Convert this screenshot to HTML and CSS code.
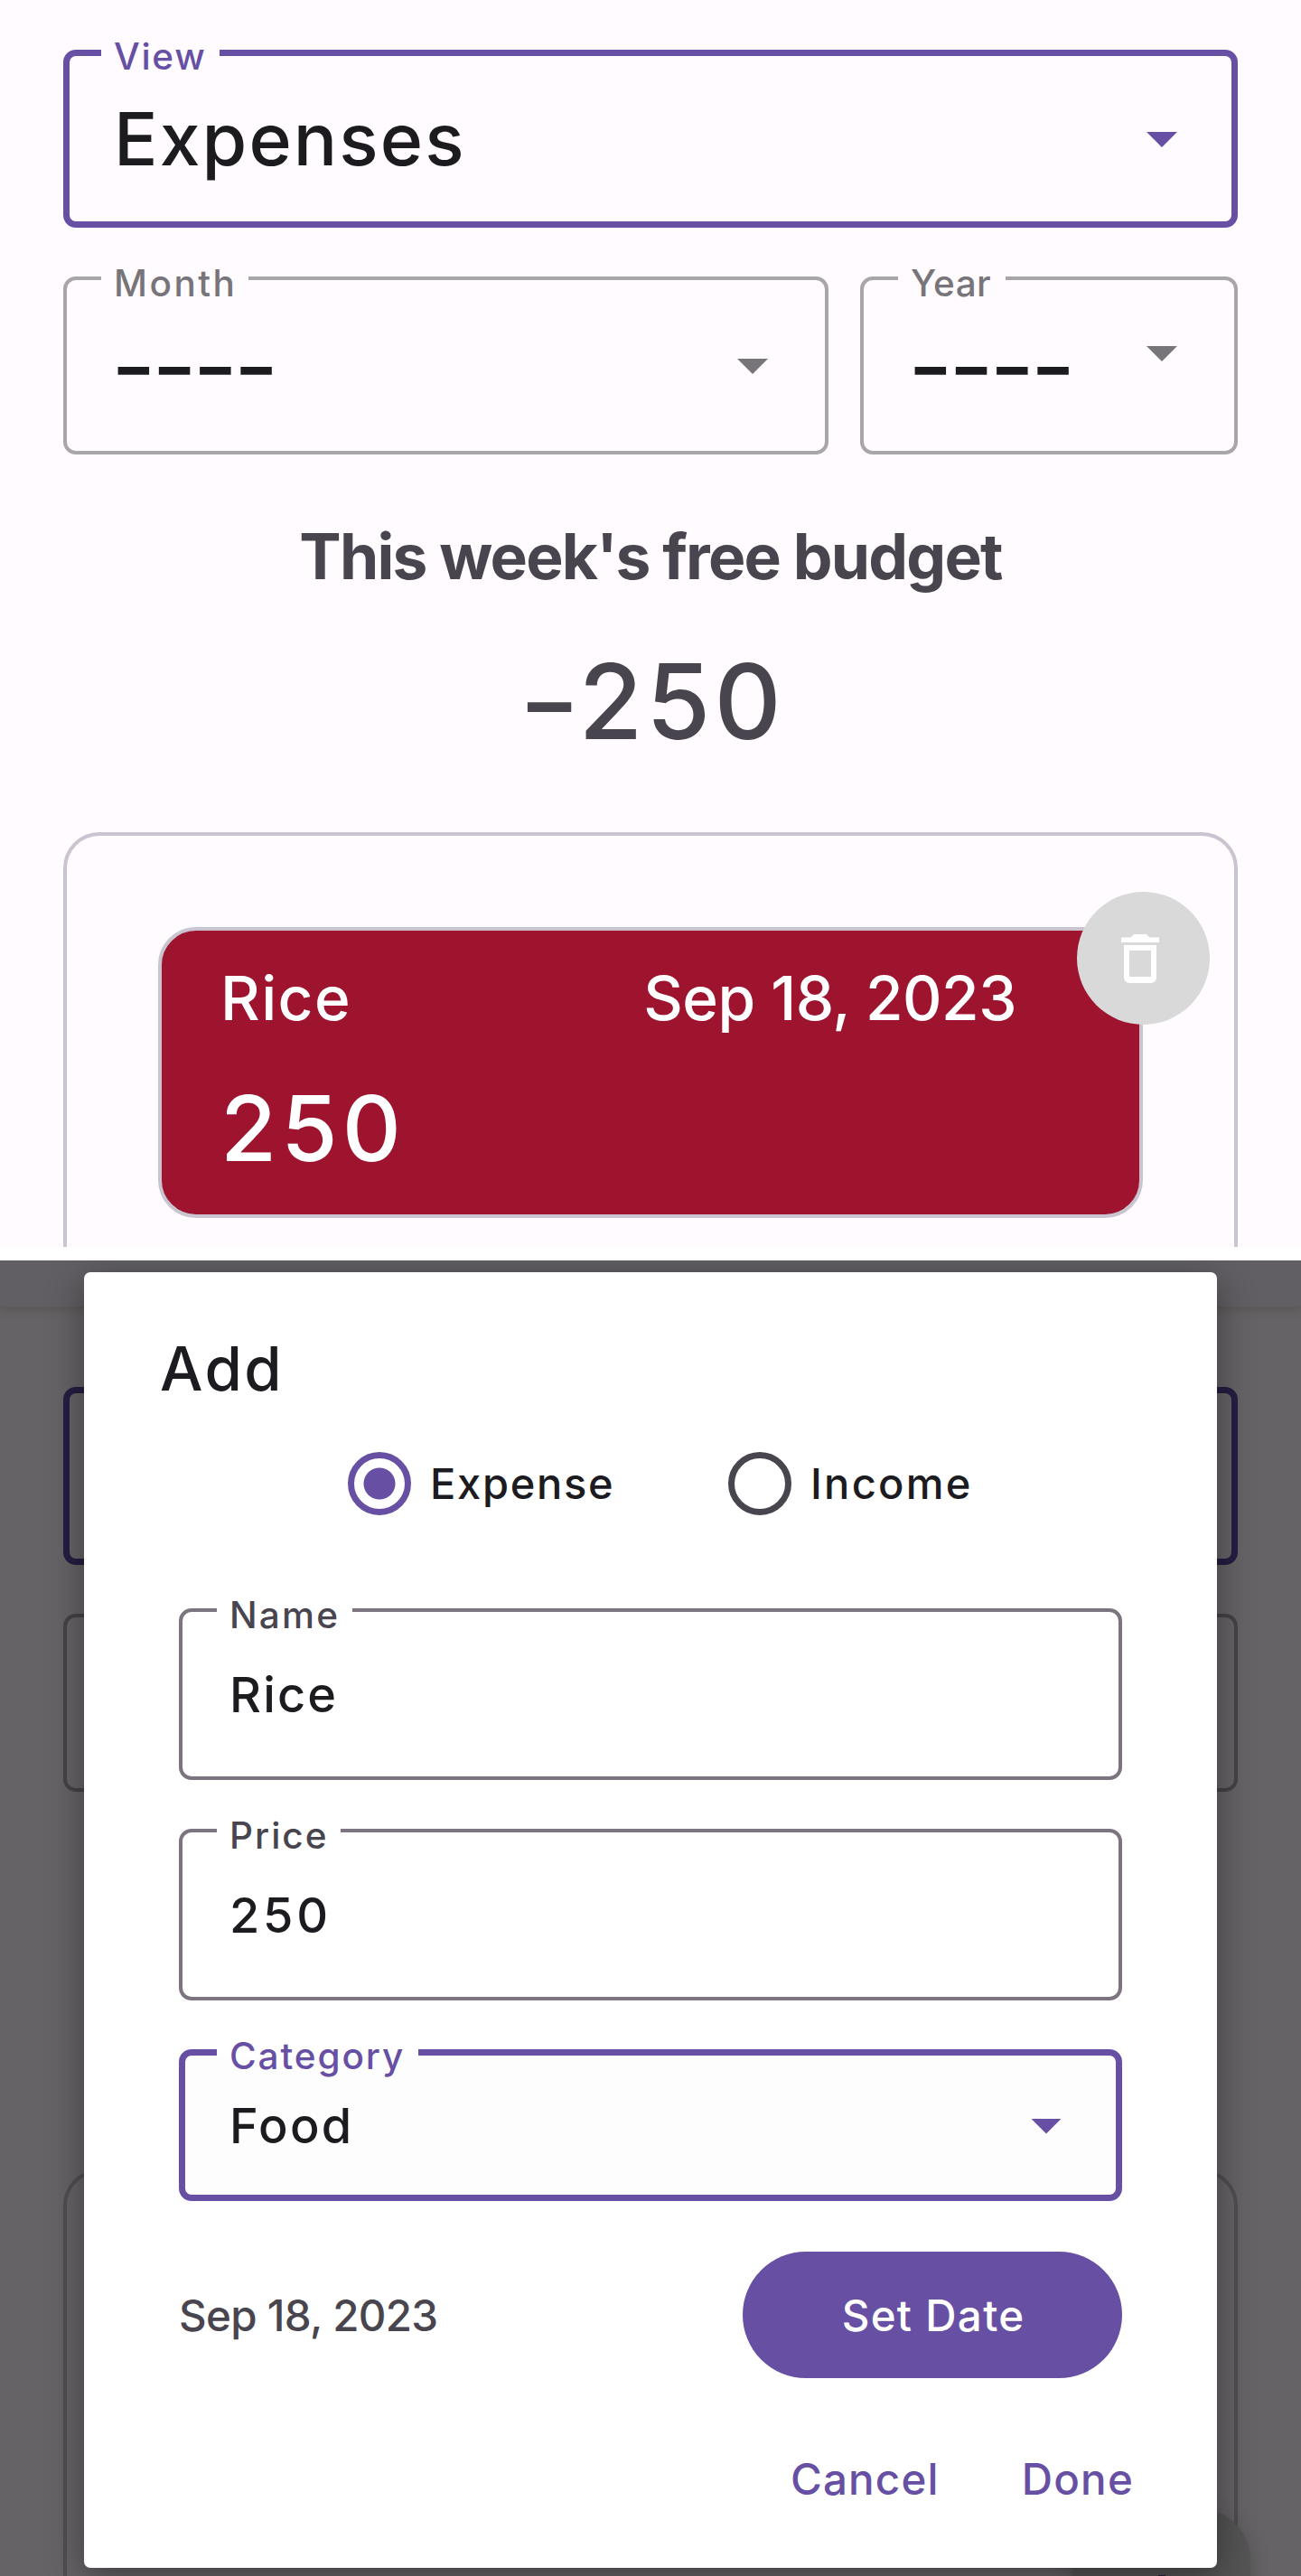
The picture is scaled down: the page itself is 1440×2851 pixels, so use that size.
FILE: index.html
```html
<!DOCTYPE html>
<html lang="en">
<head>
<meta charset="utf-8">
<title>Budget</title>
<link rel="stylesheet" href="styles.css">
</head>
<body>
<main class="screen">
  <div class="field field-active">
    <span class="label label-view">View</span>
    <span class="value value-lg">Expenses</span>
    <i class="caret"></i>
  </div>
  <div class="filters">
    <div class="field field-muted month">
      <span class="label label-month">Month</span>
      <span class="value value-empty">----</span>
      <i class="caret"></i>
    </div>
    <div class="field field-muted year">
      <span class="label label-year">Year</span>
      <span class="value value-empty">----</span>
      <i class="caret"></i>
    </div>
  </div>
  <h1 class="heading">This week's free budget</h1>
  <div class="total"><span class="minus">-</span>250</div>
  <section class="card">
    <article class="entry">
      <div class="entry-top">
        <span class="entry-name">Rice</span>
        <span class="entry-date">Sep 18, 2023</span>
      </div>
      <div class="entry-amount">250</div>
      <button class="delete" aria-label="Delete">
        <svg width="42" height="54" viewBox="0 0 42 54" fill="#fff">
          <path d="M0 3.5h10.500L14 0h14l3.500 3.500H42V9H0z"/>
          <path fill-rule="evenodd" d="M3 12h36v36a6 6 0 0 1-6 6H9a6 6 0 0 1-6-6zM9 18v29h24V18z"/>
        </svg>
      </button>
    </article>
  </section>
</main>

<section class="screen-dim">
  <div class="backdrop">
    <div class="appbar"></div>
    <div class="backdrop-body">
      <div class="ghost ghost-active"></div>
      <div class="filters">
        <div class="ghost month"></div>
        <div class="ghost year"></div>
      </div>
      <div class="ghost-card"></div>
    </div>
    <div class="fab"></div>
  </div>

  <div class="dialog">
    <h2 class="title">Add</h2>
    <div class="radios">
      <label class="radio radio-on"><span class="dot"></span><span class="radio-text">Expense</span></label>
      <label class="radio"><span class="dot"></span><span class="radio-text radio-income">Income</span></label>
    </div>
    <div class="form">
      <div class="field">
        <span class="label label-name">Name</span>
        <span class="value">Rice</span>
      </div>
      <div class="field">
        <span class="label label-price">Price</span>
        <span class="value value-num">250</span>
      </div>
      <div class="field field-active field-short">
        <span class="label label-category">Category</span>
        <span class="value">Food</span>
        <i class="caret"></i>
      </div>
      <div class="date-row">
        <span class="date">Sep 18, 2023</span>
        <button class="set-date">Set Date</button>
      </div>
    </div>
    <div class="actions">
      <span>Cancel</span>
      <span>Done</span>
    </div>
  </div>
</section>
</body>
</html>
```
FILE: styles.css
```css
* { box-sizing: border-box; }
body {
  margin: 0;
  width: 1440px;
  background: #fff;
  color: #1c1b1f;
  font-family: Inter, "Liberation Sans", sans-serif;
  font-weight: 500;
}
h1, h2 { margin: 0; }
button { border: 0; padding: 0; font: inherit; }

.screen {
  height: 1380px;
  padding: 55px 70px 0;
  overflow: hidden;
  background: #fffbff;
}

/* Outlined fields */
.field {
  --line: #7c7580;
  --ink: #49454f;
  --bw: 4px;
  --surface: #fff;
  position: relative;
  display: flex;
  align-items: center;
  justify-content: space-between;
  height: 190px;
  padding: 0 calc(67px - var(--bw)) 0 calc(56px - var(--bw));
  border: var(--bw) solid var(--line);
  border-radius: 14px;
}
.screen .field { --surface: #fffbff; height: 197px; }
.field-active { --line: #6750a4; --ink: #6750a4; --bw: 7px; }
.field-muted { --line: #a9a6aa; --ink: #78757a; }
.form .field-short { height: 168px; background: #fdfdfd; }

.label {
  position: absolute;
  top: calc(-12px - var(--bw));
  left: calc(42px - var(--bw));
  padding-left: 14px;
  background: linear-gradient(var(--surface), var(--surface)) 0 11px / 100% 10px no-repeat;
  color: var(--ink);
  font-size: 40.5px;
  line-height: 40px;
  white-space: nowrap;
}
.label-view { width: 131px; letter-spacing: 1.7px; }
.label-month { width: 163px; letter-spacing: 2.5px; }
.label-year { width: 119px; letter-spacing: 0.4px; }
.label-name { width: 150px; letter-spacing: 2.2px; }
.label-price { width: 137px; letter-spacing: 2px; }
.label-category { width: 223px; letter-spacing: 1.9px; }

.value { font-size: 54px; letter-spacing: 2.2px; }
.value-num { letter-spacing: 3.8px; }
.value-lg { font-size: 80.5px; letter-spacing: 2.1px; }
.value-empty { margin-left: -3px; font-size: 108px; font-weight: 400; line-height: 100px; letter-spacing: -4.4px; }

.caret {
  width: 34px;
  height: 17px;
  margin-top: 2px;
  background: var(--line);
  clip-path: polygon(0 0, 100% 0, 50% 100%);
}
.field-muted .caret { background: #78757a; }
.year .caret { margin-bottom: 28px; }

.filters { display: flex; gap: 35px; margin-top: 54px; }
.month { width: 847px; }
.year { width: 418px; }

.heading {
  margin-top: 73px;
  color: #49454f;
  font-size: 69.5px;
  font-weight: 700;
  line-height: 80px;
  letter-spacing: -1.8px;
  text-align: center;
}
.total {
  margin-top: 61px;
  padding-left: 11px;
  color: #49454f;
  font-size: 115px;
  line-height: 120px;
  letter-spacing: 4px;
  text-align: center;
}
.minus { display: inline-block; margin-right: 1px; transform: scaleX(1.3); }

.card {
  height: 600px;
  margin-top: 84px;
  padding: 101px;
  border: 4px solid #cac4d0;
  border-radius: 40px;
}
.entry {
  position: relative;
  height: 322px;
  padding: 35px 136px 0 65px;
  border: 4px solid #cac4d0;
  border-radius: 42px;
  background: #9e142f;
  color: #fff;
}
.entry-top {
  display: flex;
  justify-content: space-between;
  font-size: 67.5px;
  line-height: 80px;
}
.entry-name { letter-spacing: 1.4px; }
.entry-date { letter-spacing: -0.5px; }
.entry-amount {
  margin-top: 48px;
  font-size: 101px;
  line-height: 110px;
  letter-spacing: 5px;
}
.delete {
  position: absolute;
  top: -43px;
  right: -78px;
  display: grid;
  place-items: center;
  width: 147px;
  height: 147px;
  padding: 0 7px 0 0;
  border-radius: 50%;
  background: #d9d9d9;
}

/* Dimmed screen with the dialog on top */
.screen-dim {
  display: grid;
  height: 1456px;
  margin-top: 15px;
  overflow: hidden;
}
.backdrop, .dialog { grid-area: 1 / 1; }
.backdrop { position: relative; height: 1456px; overflow: hidden; background: #666366; }
.appbar {
  height: 51px;
  background: #615f64;
  box-shadow: 0 2px 10px rgba(60, 60, 50, 0.4);
}
.backdrop-body { padding: 89px 70px 0; }
.ghost {
  height: 197px;
  border: 4px solid #454346;
  border-radius: 14px;
}
.ghost-active { border: 7px solid #271d42; }
.ghost-card {
  height: 600px;
  margin-top: 418px;
  border: 4px solid #504e52;
  border-radius: 40px 40px 0 0;
}
.fab {
  position: absolute;
  left: 1187px;
  top: 1382px;
  width: 197px;
  height: 197px;
  border-radius: 56px;
  background: linear-gradient(#271d42, #271d42) center 73px / 8px 51px no-repeat #545454;
  box-shadow: 0 6px 24px rgba(0, 0, 0, 0.2);
}

.dialog {
  z-index: 1;
  width: 1254px;
  height: 1434px;
  margin: 13px auto 0;
  padding-top: 67px;
  border-radius: 7px;
  background: #fff;
  box-shadow: 0 10px 40px rgba(0, 0, 0, 0.4);
}
.title {
  padding-left: 84px;
  font-size: 67px;
  font-weight: 500;
  line-height: 80px;
  letter-spacing: 2.4px;
}
.radios {
  display: grid;
  grid-template-columns: 421px auto;
  margin-top: 52px;
  padding-left: 292px;
}
.radio { display: flex; align-items: center; gap: 21px; }
.dot {
  width: 70px;
  height: 70px;
  border: 7px solid #49454f;
  border-radius: 50%;
}
.radio-on .dot {
  border-color: #6750a4;
  background: radial-gradient(circle, #6750a4 17px, transparent 18px);
}
.radio-text { margin-top: -1px; font-size: 47px; letter-spacing: 1.7px; }
.radio-income { letter-spacing: 2.3px; }

.form {
  display: flex;
  flex-direction: column;
  gap: 54px;
  margin: 103px 105px 0;
}
.date-row {
  display: flex;
  align-items: center;
  justify-content: space-between;
  margin-top: 2px;
  font-size: 47.5px;
}
.date { color: #49454f; letter-spacing: -0.7px; }
.set-date {
  width: 420px;
  height: 140px;
  padding-left: 2px;
  border-radius: 70px;
  background: #6750a4;
  color: #fff;
  letter-spacing: 1.3px;
}
.actions {
  display: flex;
  justify-content: flex-end;
  gap: 91px;
  margin-top: 82px;
  padding-right: 92px;
  color: #6750a4;
  font-size: 47.5px;
  line-height: 60px;
  letter-spacing: 1.2px;
}
```
